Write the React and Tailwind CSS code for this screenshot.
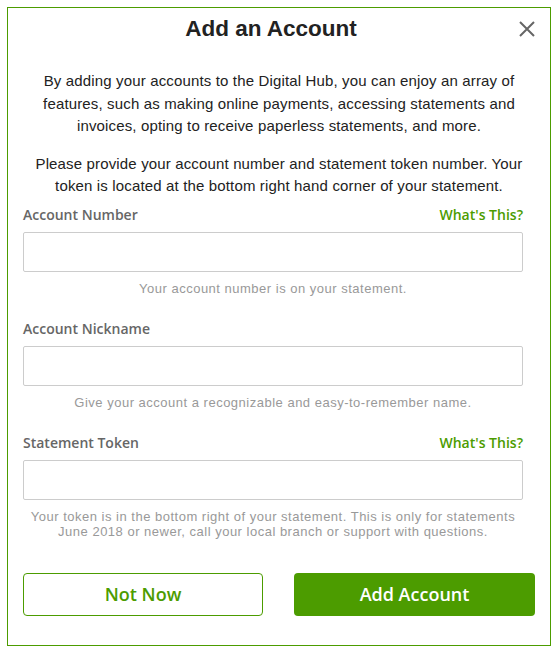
import React from "react";

const fields = [
  {
    label: "Account Number",
    help: true,
    hint: "Your account number is on your statement.",
  },
  {
    label: "Account Nickname",
    help: false,
    hint: "Give your account a recognizable and easy-to-remember name.",
  },
  {
    label: "Statement Token",
    help: true,
    hint: "Your token is in the bottom right of your statement. This is only for statements June 2018 or newer, call your local branch or support with questions.",
  },
];

const App = () => {
  return (
    <div className="p-[7px] bg-white font-['Liberation_Sans',Arial,sans-serif]">
      <div className="w-[544px] h-[639px] border border-[#4c9c00] bg-white flex flex-col">
        <div className="flex items-center px-[15px] pt-[7px]">
          <h1 className="flex-1 text-center text-[22.5px] leading-[28px] font-bold text-[#222]">Add an Account</h1>
          <button className="w-[16px] h-[16px] text-[#666]" aria-label="Close">
            <svg viewBox="0 0 16 16" width="16" height="16" fill="none" stroke="currentColor" strokeWidth="2">
              <path d="M1 1L15 15M15 1L1 15" />
            </svg>
          </button>
        </div>

        <div className="px-[20px] mt-[27px] text-center text-[15px] leading-[22.5px] tracking-[0.15px] text-[#222]">
          <p>
            By adding your accounts to the Digital Hub, you can enjoy an array of features, such as making online
            payments, accessing statements and invoices, opting to receive paperless statements, and more.
          </p>
          <p className="mt-[15px]">
            Please provide your account number and statement token number. Your token is located at the bottom right
            hand corner of your statement.
          </p>
        </div>

        <div className="pl-[15px] pr-[27px] mt-[7px] flex flex-col gap-[22px]">
          {fields.map((f) => (
            <div key={f.label}>
              <div className="flex justify-between font-['Open_Sans',sans-serif] text-[14px] leading-[20px] font-semibold">
                <span className="text-[#666]">{f.label}</span>
                {f.help && <span className="text-[#4c9c00]">What's This?</span>}
              </div>
              <div className="mt-[7px] h-[40px] border border-[#ccc] rounded-[2px]" />
              <p className="mt-[10.5px] text-center text-[13px] leading-[14.5px] tracking-[0.5px] text-[#999]">{f.hint}</p>
            </div>
          ))}
        </div>

        <div className="px-[15px] mt-[34px] flex justify-between font-['Open_Sans',sans-serif] text-[18px] font-semibold">
          <button className="w-[240px] h-[43px] border border-[#4c9c00] rounded-[4px] text-[#4c9c00]">Not Now</button>
          <button className="w-[241px] h-[43px] rounded-[4px] bg-[#4c9c00] text-white">Add Account</button>
        </div>
      </div>
    </div>
  );
};

export default App;
